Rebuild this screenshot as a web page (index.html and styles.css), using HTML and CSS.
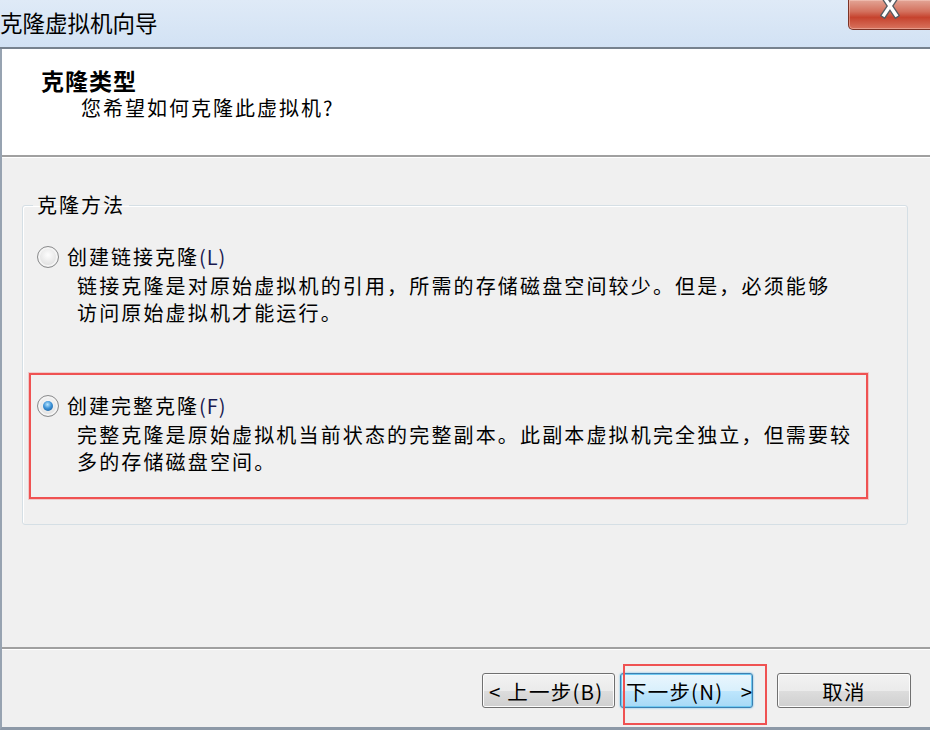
FILE: index.html
```html
<!DOCTYPE html>
<html lang="zh-CN">

<head>
  <meta charset="UTF-8">
  <meta name="viewport" content="width=device-width, initial-scale=1.0">
  <title>克隆虚拟机向导</title>
  <link rel="stylesheet" href="styles.css">
</head>

<body>
  <div class="titlebar">
    <div class="title">克隆虚拟机向导</div>
    <div class="close">
      <svg width="22" height="20" viewBox="0 0 22 20">
        <path d="M5 -3 L17 15 M17 -3 L5 15" stroke="#555b62" stroke-width="6" stroke-linecap="square" fill="none"/>
        <path d="M5 -3 L17 15 M17 -3 L5 15" stroke="#ffffff" stroke-width="3.4" stroke-linecap="square" fill="none"/>
      </svg>
    </div>
  </div>
  <div class="frame">
    <div class="header">
      <div class="header-title">克隆类型</div>
      <div class="header-sub">您希望如何克隆此虚拟机?</div>
    </div>
    <div class="content">
      <fieldset class="group">
        <legend>克隆方法</legend>
        <div class="option">
          <div class="option-row">
            <span class="radio"></span>
            <span class="option-label">创建链接克隆<span class="key">(L)</span></span>
          </div>
          <div class="option-desc">链接克隆是对原始虚拟机的引用，所需的存储磁盘空间较少。但是，必须能够<br>访问原始虚拟机才能运行。</div>
        </div>
        <div class="option marked">
          <div class="option-row">
            <span class="radio checked"></span>
            <span class="option-label">创建完整克隆<span class="key">(F)</span></span>
          </div>
          <div class="option-desc">完整克隆是原始虚拟机当前状态的完整副本。此副本虚拟机完全独立，但需要较<br>多的存储磁盘空间。</div>
        </div>
      </fieldset>
    </div>
    <div class="footer">
      <div class="button back">&lt; 上一步(B)</div>
      <div class="next-wrap">
        <div class="button next">下一步(N) &nbsp;&nbsp;&gt;</div>
      </div>
      <div class="button cancel">取消</div>
    </div>
  </div>
</body>

</html>
```
FILE: styles.css
```css
* {
  box-sizing: border-box;
}
body {
  margin: 0;
  width: 930px;
  height: 730px;
  overflow: hidden;
  font-family: "Noto Sans CJK SC", "Noto Sans", sans-serif;
  color: #000;
  background: #f0f0f0;
}
.titlebar {
  display: flex;
  align-items: flex-start;
  height: 49px;
  background: linear-gradient(to bottom, #dfeaf7, #d2e2f4);
  border-bottom: 2px solid #77828e;
  overflow: hidden;
}
.title {
  padding-top: 7px;
  font-size: 22.5px;
  line-height: 30px;
}
.close {
  margin-left: auto;
  margin-right: -4px;
  width: 86px;
  height: 30px;
  display: flex;
  justify-content: center;
  align-items: flex-start;
  border: 1px solid #7c3326;
  border-top: none;
  border-radius: 0 0 0 5px;
  background: linear-gradient(to bottom, #e3a596 0%, #d3705d 40%, #c6432e 60%, #d8735e 100%);
  box-shadow: inset 0 0 0 1px rgba(255, 220, 210, 0.4);
}
.close svg {
  display: block;
  margin-right: 2px;
}
.frame {
  display: flex;
  flex-direction: column;
  height: 681px;
  border-left: 2px solid #97a3b1;
  border-bottom: 3px solid #8d99a7;
}
.header {
  height: 108px;
  padding: 17px 0 0 39px;
  background: #fff;
  border-bottom: 2px solid #a0a0a0;
}
.header-title {
  font-size: 23px;
  font-weight: bold;
  letter-spacing: 1px;
  line-height: 28px;
}
.header-sub {
  margin-top: 1px;
  padding-left: 40px;
  font-size: 20px;
  letter-spacing: 2px;
  line-height: 26px;
}
.content {
  flex: 1;
  padding: 34px 22px 0 20px;
  border-top: 1px solid #fff;
}
.group {
  margin: 0;
  padding: 0 0 25px;
  height: 333px;
  border: 1px solid #d5dfe5;
  border-radius: 3px;
  box-shadow: inset 1px 1px 0 #fff;
}
.group legend {
  margin-left: 10px;
  padding: 0 4px;
  font-size: 20px;
  letter-spacing: 2px;
  line-height: 26px;
}
.option {
  margin: 6px 39px 0 6px;
  padding: 18px 0 22px 6px;
  border: 2px solid transparent;
  font-size: 20px;
  letter-spacing: 2px;
  line-height: 26px;
}
.option.marked {
  margin-top: 23px;
  border-color: #ef5252;
  box-shadow: 0 0 0 1px rgba(239, 82, 82, 0.25);
}
.option-row {
  display: flex;
  align-items: center;
  gap: 8px;
}
.key {
  color: #1a1a50;
  letter-spacing: 1px;
}
.option-desc {
  margin-top: 2px;
  padding-left: 40px;
  letter-spacing: 2.15px;
  line-height: 27px;
}
.radio {
  position: relative;
  width: 22px;
  height: 22px;
  border-radius: 50%;
  border: 1px solid #8b8c8d;
  background: radial-gradient(circle at 50% 40%, #fdfdfd 0%, #e6e6e6 55%, #c9c9c9 100%);
  box-shadow: inset 0 0 0 2px #f4f4f4;
}
.radio.checked::after {
  content: "";
  position: absolute;
  left: 5px;
  top: 5px;
  width: 10px;
  height: 10px;
  border-radius: 50%;
  background: radial-gradient(circle at 45% 35%, #b8e6ff 0%, #3d93d8 45%, #0c4f8f 100%);
}
.footer {
  display: flex;
  justify-content: flex-end;
  align-items: flex-start;
  height: 80px;
  padding: 24px 19px 0 0;
  border-top: 2px solid #a0a0a0;
  box-shadow: inset 0 1px 0 #fff;
}
.button {
  width: 133px;
  height: 35px;
  display: flex;
  align-items: center;
  justify-content: center;
  font-size: 20.5px;
  letter-spacing: 1.2px;
  white-space: pre;
  border: 1px solid #707070;
  border-radius: 3px;
  background: linear-gradient(to bottom, #f2f2f2 0%, #ebebeb 50%, #dddddd 51%, #cfcfcf 100%);
  box-shadow: inset 0 0 0 1px #fcfcfc;
}
.back {
  justify-content: flex-start;
  padding-left: 6px;
}
.next-wrap {
  position: relative;
  margin-left: 5px;
}
.next-wrap::after {
  content: "";
  position: absolute;
  left: 3px;
  top: -9px;
  width: 140px;
  height: 57px;
  border: 2px solid #ef5252;
}
.next {
  justify-content: flex-start;
  padding-left: 5px;
  border-color: #3c7fb1;
  background: linear-gradient(to bottom, #eaf6fd 0%, #d9f0fc 50%, #bee6fd 51%, #a7d9f5 100%);
  box-shadow: inset 0 0 0 1px #6ec8f0, 0 0 2px #4fb4e8;
}
.cancel {
  margin-left: 24px;
  width: 134px;
}
```
